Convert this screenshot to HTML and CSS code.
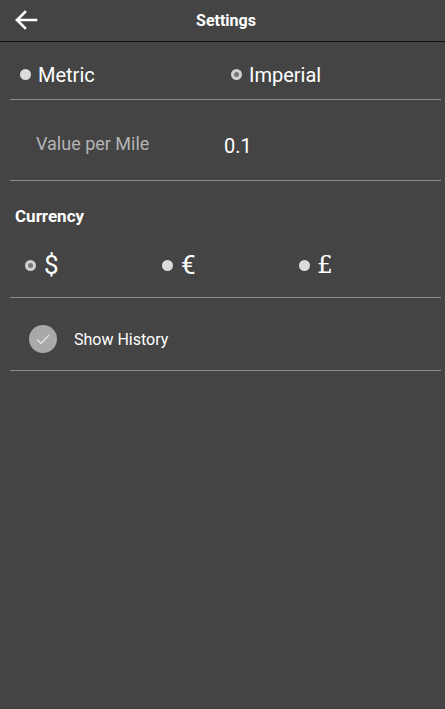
FILE: index.html
```html
<!DOCTYPE html>
<html>
<head>
<meta charset="utf-8">
<link rel="stylesheet" href="styles.css">
</head>
<body>
<header class="header">
  <svg class="back" width="24" height="20" viewBox="0 0 24 20"><path d="M22 10H3M11 2L3 10l8 8" fill="none" stroke="#fff" stroke-width="2.6" stroke-linecap="square"/></svg>
  <div class="title">Settings</div>
</header>
<main class="content">
  <div class="row units">
    <label class="radio r-metric"><span class="dot"></span><span class="lbl">Metric</span></label>
    <label class="radio r-imp"><span class="dot sel"></span><span class="lbl">Imperial</span></label>
  </div>
  <div class="row value">
    <span class="vlabel">Value per Mile</span>
    <span class="vval">0.1</span>
  </div>
  <div class="row currency">
    <div class="ctitle">Currency</div>
    <div class="cur-opts">
      <label class="radio c1"><span class="dot sel"></span><span class="sym">$</span></label>
      <label class="radio c2"><span class="dot"></span><span class="sym">€</span></label>
      <label class="radio c3"><span class="dot"></span><span class="sym serif">£</span></label>
    </div>
  </div>
  <div class="row history">
    <span class="check"><svg width="16" height="12" viewBox="0 0 16 12"><path d="M2 6.5l4 4L14 2" fill="none" stroke="#e0e0e0" stroke-width="1.4"/></svg></span>
    <span class="hlabel">Show History</span>
  </div>
</main>
</body>
</html>
```
FILE: styles.css
```css
html, body { margin: 0; padding: 0; }
body {
  background: #444444;
  font-family: Roboto, "Liberation Sans", sans-serif;
  color: #fff;
  width: 445px;
  height: 709px;
  overflow: hidden;
}
.header {
  height: 41px;
  border-bottom: 1px solid #111;
  display: flex;
  align-items: center;
  position: relative;
}
.back { margin-left: 14px; margin-top: -1px; }
.title {
  position: absolute;
  left: 0; right: 0;
  text-align: center;
  font-weight: bold;
  font-size: 16px;
  top: 11px;
  padding-left: 7px;
}
.content { padding: 0 4px 0 10px; }
.row { border-bottom: 1px solid #8a8a8a; }
.radio { display: flex; align-items: center; }
.dot {
  width: 11px; height: 11px; border-radius: 50%;
  background: #dcdcdc;
  box-sizing: border-box;
  flex: none;
}
.dot.sel { border: 3px solid #cfcfcf; background: #777; }
.units { height: 57px; display: flex; align-items: center; }
.units .radio { width: 211px; padding-left: 10px; margin-top: 8px; }
.units .lbl { font-size: 20px; margin-left: 7px; }
.units .r-imp { padding-left: 1px; }
.value { height: 80px; display: flex; align-items: center; }
.vlabel { color: #b4b4b4; font-size: 18px; margin-left: 26px; width: 188px; margin-top: 7px; }
.vval { font-size: 20px; margin-top: 12px; }
.currency { height: 116px; }
.ctitle { font-weight: bold; font-size: 17px; padding: 25px 0 0 5px; }
.cur-opts { display: flex; padding-left: 15px; margin-top: 26px; }
.cur-opts .radio { width: 137px; }
.cur-opts .c3 { width: auto; }
.sym { font-size: 26px; margin-left: 8px; line-height: 26px; }
.c2 .sym { margin-left: 8px; }
.c3 .sym { margin-left: 7px; }
.serif { font-family: "DejaVu Serif", "Liberation Serif", serif; font-size: 25px; }
.history { height: 72px; display: flex; align-items: center; }
.check {
  width: 28px; height: 28px; border-radius: 50%;
  background: #a9a9a9;
  margin-left: 19px;
  display: flex; align-items: center; justify-content: center;
  margin-top: 10px;
}
.hlabel { font-size: 16px; margin-left: 17px; margin-top: 10px; }
```
